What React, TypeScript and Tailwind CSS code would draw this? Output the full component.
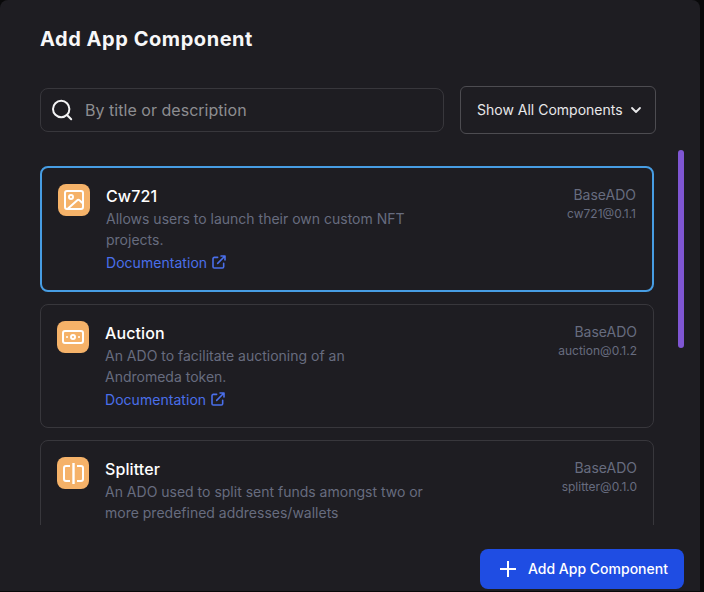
import type { ReactNode } from "react";

type Item = {
  name: string;
  lines: string[];
  version: string;
  icon: ReactNode;
  selected?: boolean;
  documented?: boolean;
};

const stroke = {
  fill: "none",
  stroke: "currentColor",
  strokeWidth: 2,
  strokeLinecap: "round",
  strokeLinejoin: "round",
} as const;

const ImageIcon = () => (
  <svg className="size-6" viewBox="0 0 24 24" {...stroke}>
    <rect x="3" y="3" width="18" height="18" rx="2" />
    <circle cx="9" cy="9" r="2" />
    <path d="m6 20.500 9-8.100a2 2 0 0 1 2.700 0l3.300 3" />
  </svg>
);

const CashIcon = () => (
  <svg className="size-6" viewBox="0 0 24 24" {...stroke}>
    <rect x="2" y="6" width="20" height="12" rx="2" />
    <circle cx="12" cy="12" r="2" />
    <path d="M6 12h.01M18 12h.01" />
  </svg>
);

const SplitIcon = () => (
  <svg className="size-6" viewBox="0 0 24 24" {...stroke} strokeLinecap="butt">
    <path d="M9 5H5a2 2 0 0 0-2 2v11a2 2 0 0 0 2 2h4M16 5h4a2 2 0 0 1 2 2v11a2 2 0 0 1-2 2h-4" />
    <path d="M12.500 2v21" strokeWidth="2.400" />
  </svg>
);

const items: Item[] = [
  {
    name: "Cw721",
    lines: ["Allows users to launch their own custom NFT", "projects."],
    version: "cw721@0.1.1",
    icon: <ImageIcon />,
    selected: true,
    documented: true,
  },
  {
    name: "Auction",
    lines: ["An ADO to facilitate auctioning of an", "Andromeda token."],
    version: "auction@0.1.2",
    icon: <CashIcon />,
    documented: true,
  },
  {
    name: "Splitter",
    lines: ["An ADO used to split sent funds amongst two or", "more predefined addresses/wallets"],
    version: "splitter@0.1.0",
    icon: <SplitIcon />,
  },
];

function Card({ item }: { item: Item }) {
  return (
    <div
      className={
        "flex min-h-[124px] shrink-0 items-start rounded-lg p-4 " +
        (item.selected ? "border-2 border-[#479de3]" : "border border-[#38373c]")
      }
    >
      <div className="flex size-8 shrink-0 items-center justify-center rounded-lg bg-[#f5b269] text-white">
        {item.icon}
      </div>
      <div className="ml-4 flex-1 whitespace-nowrap">
        <h2 className="text-base leading-6 font-medium tracking-[0.1px] text-white">{item.name}</h2>
        <p className="text-sm leading-[21px] text-[#676c7f]">
          {item.lines.map((line) => (
            <span key={line} className="block">
              {line}
            </span>
          ))}
        </p>
        {item.documented && (
          <a className="flex h-6 items-center gap-1 text-sm text-[#4a6fea]">
            <span className="pt-0.5 tracking-[0.04px]">Documentation</span>
            <svg className="size-4" viewBox="0 0 24 24" {...stroke} strokeWidth="2.400">
              <path d="M10 5H5a2 2 0 0 0-2 2v12a2 2 0 0 0 2 2h12a2 2 0 0 0 2-2v-5M10 14 21 3M15 3h6v6" />
            </svg>
          </a>
        )}
      </div>
      <div className="text-right text-[#676c7f]">
        <p className="text-sm leading-[21px]">BaseADO</p>
        <p className="text-xs leading-[18px]">{item.version}</p>
      </div>
    </div>
  );
}

export default function App() {
  return (
    <div className="h-[592px] w-[704px] overflow-hidden bg-[#09090a] font-['Inter',sans-serif]">
      <main className="flex h-[591px] w-[700px] flex-col rounded-t-lg bg-[#1e1d22]">
        <h1 className="mt-6 ml-10 text-xl leading-[30px] font-bold tracking-[0.55px] text-[#f7f7f8]">
          Add App Component
        </h1>
        <div className="mt-8 ml-10 flex h-12 items-center gap-4">
          <div className="flex h-11 w-[404px] items-center rounded-lg border border-[#38373c] pl-[9px]">
            <svg className="size-6 text-[#f4f4f5]" viewBox="0 0 24 24" {...stroke}>
              <circle cx="11.200" cy="11" r="8.200" />
              <path d="m21.200 21.200-4.200-4.200" />
            </svg>
            <span className="ml-[11px] text-base tracking-[0.03px] text-[#8d8d91]">By title or description</span>
          </div>
          <button className="flex h-12 w-[196px] items-center rounded-md border border-[#4d4c51] pl-4 text-sm whitespace-nowrap text-[#e8e8ea]">
            Show All Components
            <svg className="ml-[5px] size-4" viewBox="0 0 16 16" {...stroke} strokeWidth="1.800">
              <path d="m4 6 4 4 4-4" />
            </svg>
          </button>
        </div>
        <section className="mt-4 flex h-[375px] items-start">
          <div className="mt-4 ml-10 flex h-[359px] w-[614px] flex-col gap-3 overflow-hidden">
            {items.map((item) => (
              <Card key={item.name} item={item} />
            ))}
          </div>
          <div className="ml-6 h-[198px] w-1.5 rounded-full bg-[#7f56d3]" />
        </section>
        <button className="mt-6 mr-4 flex h-10 w-[204px] items-center self-end rounded-lg bg-[#1f4de3] pl-4 text-sm font-medium whitespace-nowrap text-white">
          <svg className="mr-2 size-6" viewBox="0 0 24 24" {...stroke} strokeLinecap="butt">
            <path d="M12 4v16M4 12h16" />
          </svg>
          Add App Component
        </button>
      </main>
    </div>
  );
}
